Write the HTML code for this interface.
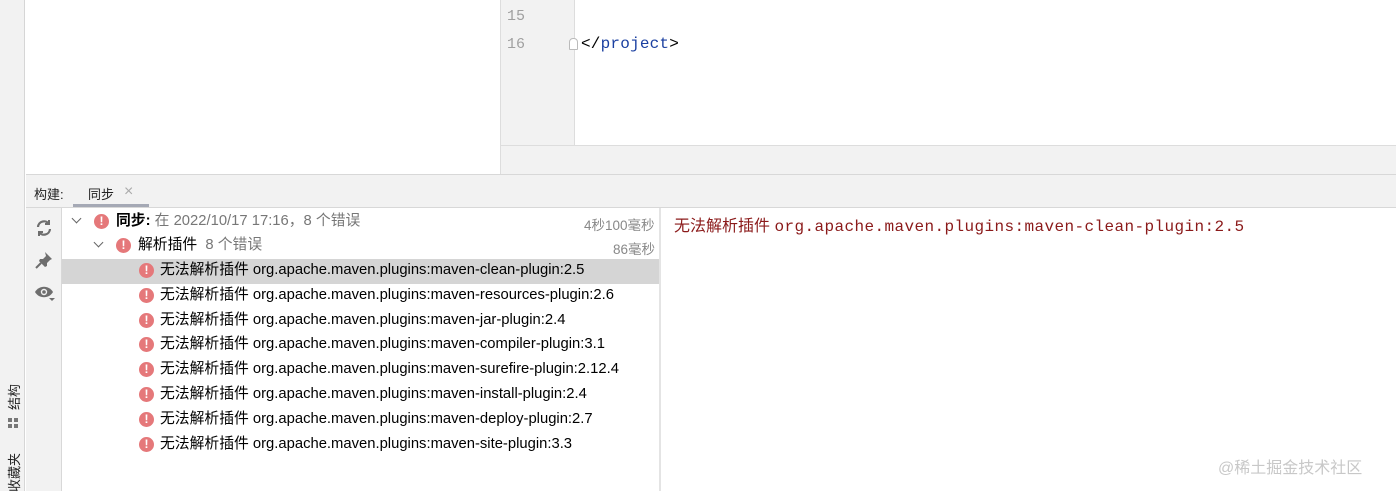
<!DOCTYPE html>
<html><head><meta charset="utf-8"><style>
*{margin:0;padding:0;box-sizing:border-box}
body{width:1396px;height:491px;overflow:hidden;background:#fff;font-family:"Liberation Sans","Noto Sans CJK SC",sans-serif;font-size:14px;color:#000;position:relative}
.a{position:absolute}
.err{position:absolute;width:15px;height:15px;border-radius:50%;background:#e5787a;color:#fff;font-weight:bold;font-size:12px;line-height:15px;text-align:center}
.row{position:absolute;left:62px;width:597px;height:25px;line-height:25px;white-space:nowrap;font-size:14.8px}
.mono{font-family:"Liberation Mono","DejaVu Sans Mono",monospace}
.chev{position:absolute;width:7px;height:7px;border-right:1.5px solid #666;border-bottom:1.5px solid #666;transform:rotate(45deg)}
.vt{position:absolute;font-size:13px;color:#222;transform:rotate(-90deg);transform-origin:left top;white-space:nowrap}
</style></head><body>
<div class="a" style="left:0;top:0;width:25px;height:491px;background:#f2f2f2;border-right:1px solid #d6d6d6"></div>
<div class="vt" style="left:4px;top:410px">结构</div>
<div class="a" style="left:8px;top:418px;width:4px;height:4px;background:#777"></div>
<div class="a" style="left:14px;top:418px;width:4px;height:4px;background:#777"></div>
<div class="a" style="left:14px;top:424px;width:4px;height:4px;background:#777"></div>
<div class="a" style="left:8px;top:424px;width:4px;height:4px;background:#777"></div>
<div class="vt" style="left:4px;top:492px">收藏夹</div>
<!-- editor -->
<div class="a" style="left:500px;top:0;width:75px;height:145px;background:#f2f2f2;border-left:1px solid #ddd;border-right:1px solid #ddd"></div>
<div class="a mono" style="left:507px;top:8px;color:#a0a0a0;font-size:15px">15</div>
<div class="a mono" style="left:507px;top:36px;color:#a0a0a0;font-size:15px">16</div>
<div class="a" style="left:569px;top:38px;width:9px;height:12px;border:1px solid #bbb;border-radius:4px 4px 1px 1px;background:#fff"></div>
<div class="a mono" style="left:581px;top:35px;font-size:16px;letter-spacing:0.2px;color:#000">&lt;/<span style="color:#1a3fa0">project</span>&gt;</div>
<div class="a" style="left:500px;top:145px;width:896px;height:29px;background:#f2f2f2;border-top:1px solid #ddd;border-left:1px solid #ddd"></div>
<!-- tool header -->
<div class="a" style="left:26px;top:174px;width:1370px;height:34px;background:#f2f2f2;border-top:1px solid #d8d8d8;border-bottom:1px solid #d8d8d8"></div>
<div class="a" style="left:34px;top:184px;font-size:13px;color:#222">构建:</div>
<div class="a" style="left:88px;top:184px;font-size:13px;color:#222">同步</div>
<div class="a" style="left:124px;top:183px;font-size:16px;color:#aaa">×</div>
<div class="a" style="left:73px;top:204px;width:76px;height:3px;background:#a5a9b5"></div>
<!-- left toolbar -->
<div class="a" style="left:26px;top:208px;width:36px;height:283px;background:#f2f2f2;border-right:1px solid #d8d8d8"></div>
<svg class="a" style="left:35px;top:219px" width="18" height="18" viewBox="0 0 18 18" fill="none" stroke="#6e6e6e" stroke-width="2.2"><path d="M3 8a6 6 0 0 1 11-3"/><path d="M15 10a6 6 0 0 1-11 3"/><path d="M14 1v4h-4M4 17v-4h4" stroke-width="2"/></svg>
<svg class="a" style="left:35px;top:251px" width="18" height="18" viewBox="0 0 18 18"><path d="M10 1l7 7-2 1-3 3 0 3-2 1-6-6 1-2 3 0 3-3z" fill="#6e6e6e"/><path d="M6 12l-5 5" stroke="#6e6e6e" stroke-width="2"/></svg>
<svg class="a" style="left:34px;top:284px" width="22" height="18" viewBox="0 0 22 18"><path d="M1 8c4-7 14-7 18 0c-4 7-14 7-18 0z" fill="#6e6e6e"/><circle cx="10" cy="8" r="3.2" fill="#f2f2f2"/><circle cx="10" cy="8" r="1.8" fill="#6e6e6e"/><path d="M15 14h6l-3 3z" fill="#6e6e6e"/></svg>
<div class="a" style="left:659px;top:208px;width:2px;height:283px;background:#e4e4e4"></div>
<!-- tree -->
<div class="a" style="left:62px;top:259px;width:597px;height:25px;background:#d5d5d5"></div>
<div class="chev" style="left:73px;top:215px"></div>
<div class="err" style="left:94px;top:214px">!</div>
<div class="row" style="top:209px;left:116px"><b>同步:</b> <span style="color:#777">在 2022/10/17 17:16，8 个错误</span></div>
<div class="a" style="left:584px;top:214px;color:#888;font-size:13.5px">4秒100毫秒</div>
<div class="chev" style="left:95px;top:239px"></div>
<div class="err" style="left:116px;top:238px">!</div>
<div class="row" style="top:233px;left:138px">解析插件 <span style="color:#777">&nbsp;8 个错误</span></div>
<div class="a" style="left:613px;top:238px;color:#888;font-size:13.5px">86毫秒</div>

<div class="err" style="left:139px;top:263px">!</div><div class="row" style="top:258px;left:160px">无法解析插件 org.apache.maven.plugins:maven-clean-plugin:2.5</div>
<div class="err" style="left:139px;top:288px">!</div><div class="row" style="top:283px;left:160px">无法解析插件 org.apache.maven.plugins:maven-resources-plugin:2.6</div>
<div class="err" style="left:139px;top:313px">!</div><div class="row" style="top:308px;left:160px">无法解析插件 org.apache.maven.plugins:maven-jar-plugin:2.4</div>
<div class="err" style="left:139px;top:337px">!</div><div class="row" style="top:332px;left:160px">无法解析插件 org.apache.maven.plugins:maven-compiler-plugin:3.1</div>
<div class="err" style="left:139px;top:362px">!</div><div class="row" style="top:357px;left:160px">无法解析插件 org.apache.maven.plugins:maven-surefire-plugin:2.12.4</div>
<div class="err" style="left:139px;top:387px">!</div><div class="row" style="top:382px;left:160px">无法解析插件 org.apache.maven.plugins:maven-install-plugin:2.4</div>
<div class="err" style="left:139px;top:412px">!</div><div class="row" style="top:407px;left:160px">无法解析插件 org.apache.maven.plugins:maven-deploy-plugin:2.7</div>
<div class="err" style="left:139px;top:437px">!</div><div class="row" style="top:432px;left:160px">无法解析插件 org.apache.maven.plugins:maven-site-plugin:3.3</div>
<!-- right -->
<div class="a" style="left:674px;top:212px;font-size:16px;color:#8b1a1a;white-space:nowrap"><span style="font-family:'Noto Sans CJK SC',sans-serif">无法解析插件</span> <span class="mono" style="letter-spacing:0.4px">org.apache.maven.plugins:maven-clean-plugin:2.5</span></div>
<div class="a" style="left:1218px;top:454px;font-size:16px;color:#c8c8c8">@稀土掘金技术社区</div>
</body></html>
